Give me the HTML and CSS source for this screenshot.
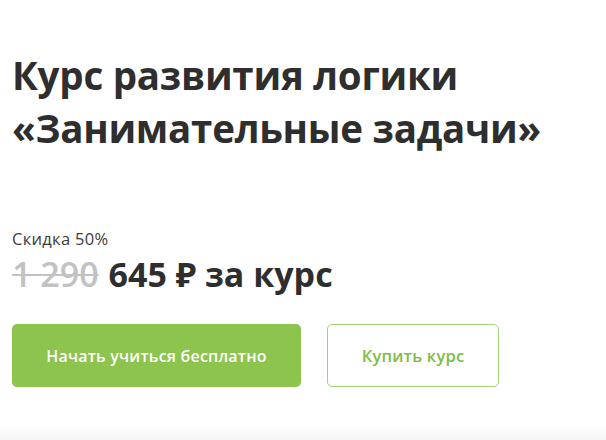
FILE: index.html
```html
<!DOCTYPE html>
<html lang="ru">
<head>
    <meta charset="UTF-8">
    <meta name="viewport" content="width=device-width, initial-scale=1.0">
    <title>Курс развития логики</title>
    <link rel="stylesheet" href="styles.css">
</head>
<body>
    <main class="course">
        <h1 class="course-title">Курс развития логики «Занимательные задачи»</h1>

        <div class="price">
            <div class="price-discount">Скидка 50%</div>
            <div class="price-row">
                <span class="price-old">1 290</span>
                <span class="price-new">645 ₽ за курс</span>
            </div>
        </div>

        <div class="course-buttons">
            <button class="btn btn-primary">Начать учиться бесплатно</button>
            <button class="btn btn-outline">Купить курс</button>
        </div>
    </main>
    <div class="bottom-band"></div>
</body>
</html>
```

FILE: styles.css
```css
body {
    margin: 0;
    font-family: "Open Sans", "Noto Sans", sans-serif;
    background: #fff;
    color: #2e2e2e;
    height: 440px;
    overflow: hidden;
}
.course {
    padding: 49px 12px 0 12px;
    height: 379px;
}
.course-title {
    margin: 0;
    width: 570px;
    font-size: 38.5px;
    line-height: 53px;
    font-weight: 700;
    letter-spacing: -0.25px;
    color: #2e2e2e;
}
.price {
    margin-top: 75px;
}
.price-discount {
    font-size: 16.5px;
    line-height: 18px;
    letter-spacing: 0.3px;
    color: #3c3c3c;
}
.price-row {
    display: flex;
    align-items: baseline;
    gap: 10px;
    margin-top: 8px;
    font-size: 34px;
    line-height: 36px;
    font-weight: 700;
}
.price-old {
    color: #c2c2c2;
    font-weight: 600;
    text-decoration: line-through;
    text-decoration-thickness: 2px;
}
.price-new {
    color: #2e2e2e;
}
.course-buttons {
    display: flex;
    gap: 26px;
    margin-top: 32px;
}
.btn {
    height: 63px;
    border-radius: 5px;
    font-family: "Open Sans", "Noto Sans", sans-serif;
    font-size: 16px;
    font-weight: 600;
    letter-spacing: 0.2px;
    cursor: pointer;
}
.btn-primary {
    width: 289px;
    background-color: #8cc44d;
    border: none;
    color: #fff;
}
.btn-outline {
    width: 172px;
    background-color: #fff;
    border: 1.5px solid #a3d17c;
    color: #7dbd45;
    font-size: 16.5px;
}
.bottom-band {
    height: 12px;
    background: linear-gradient(to bottom, #fdfdfd, #f6f6f6);
}
```
